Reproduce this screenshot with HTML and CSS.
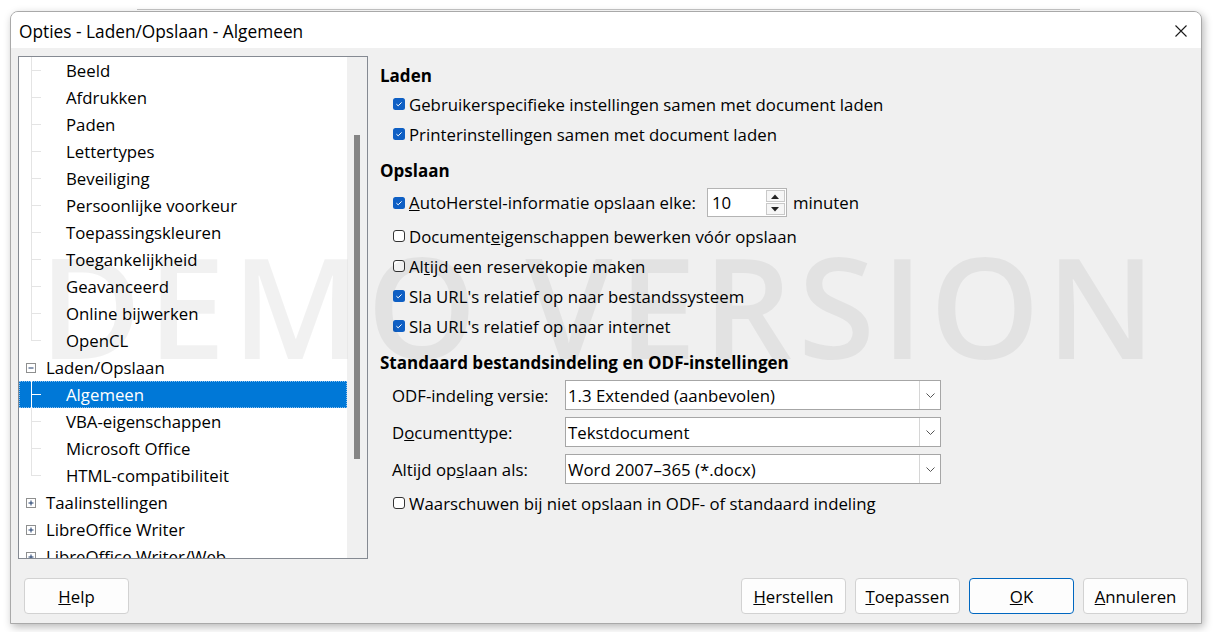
FILE: index.html
```html
<!DOCTYPE html>
<html lang="nl">
<head>
<meta charset="utf-8">
<title>Opties - Laden/Opslaan - Algemeen</title>
<link rel="stylesheet" href="styles.css">
</head>
<body>
<div class="backwin"></div>
<div class="dialog">
  <div class="titlebar">
    <span class="title">Opties - Laden/Opslaan - Algemeen</span>
    <svg class="close" width="14" height="14" viewBox="0 0 14 14"><path d="M1.5 1.5L12.5 12.5M12.5 1.5L1.5 12.5" stroke="#1a1a1a" stroke-width="1.1" fill="none"/></svg>
  </div>
  <div class="main">
    <div class="tree">
      <ul class="rows">
        <li class="row child">Beeld</li>
        <li class="row child">Afdrukken</li>
        <li class="row child">Paden</li>
        <li class="row child">Lettertypes</li>
        <li class="row child">Beveiliging</li>
        <li class="row child">Persoonlijke voorkeur</li>
        <li class="row child">Toepassingskleuren</li>
        <li class="row child">Toegankelijkheid</li>
        <li class="row child">Geavanceerd</li>
        <li class="row child">Online bijwerken</li>
        <li class="row child last">OpenCL</li>
        <li class="row top"><svg class="exp" width="10" height="10" viewBox="0 0 10 10"><rect x="0.5" y="0.5" width="9" height="9" fill="#fff" stroke="#8e8f8f"/><path d="M2.5 5H7.5" stroke="#1c3a6b"/></svg>Laden/Opslaan</li>
        <li class="row child selected">Algemeen</li>
        <li class="row child">VBA-eigenschappen</li>
        <li class="row child">Microsoft Office</li>
        <li class="row child last">HTML-compatibiliteit</li>
        <li class="row top"><svg class="exp" width="10" height="10" viewBox="0 0 10 10"><rect x="0.5" y="0.5" width="9" height="9" fill="#fff" stroke="#8e8f8f"/><path d="M2.5 5H7.5M5 2.5V7.5" stroke="#1c3a6b"/></svg>Taalinstellingen</li>
        <li class="row top"><svg class="exp" width="10" height="10" viewBox="0 0 10 10"><rect x="0.5" y="0.5" width="9" height="9" fill="#fff" stroke="#8e8f8f"/><path d="M2.5 5H7.5M5 2.5V7.5" stroke="#1c3a6b"/></svg>LibreOffice Writer</li>
        <li class="row top"><svg class="exp" width="10" height="10" viewBox="0 0 10 10"><rect x="0.5" y="0.5" width="9" height="9" fill="#fff" stroke="#8e8f8f"/><path d="M2.5 5H7.5M5 2.5V7.5" stroke="#1c3a6b"/></svg>LibreOffice Writer/Web</li>
      </ul>
      <div class="vscroll"><div class="thumb"></div></div>
    </div>
    <div class="pane">
      <div class="heading h-laden">Laden</div>
      <div class="check-row first-check">
        <svg class="cb" width="12" height="12" viewBox="0 0 12 12"><rect width="12" height="12" rx="2.5" fill="#0e5fc4"/><path d="M3.4 6.2L5.2 7.8L8.6 4.4" stroke="#fff" stroke-width="1" fill="none"/></svg>
        <span>Gebruikerspecifieke instellingen samen met document laden</span>
      </div>
      <div class="check-row">
        <svg class="cb" width="12" height="12" viewBox="0 0 12 12"><rect width="12" height="12" rx="2.5" fill="#0e5fc4"/><path d="M3.4 6.2L5.2 7.8L8.6 4.4" stroke="#fff" stroke-width="1" fill="none"/></svg>
        <span>Printerinstellingen samen met document laden</span>
      </div>

      <div class="heading h-opslaan">Opslaan</div>
      <div class="check-row spin-row">
        <svg class="cb" width="12" height="12" viewBox="0 0 12 12"><rect width="12" height="12" rx="2.5" fill="#0e5fc4"/><path d="M3.4 6.2L5.2 7.8L8.6 4.4" stroke="#fff" stroke-width="1" fill="none"/></svg>
        <span><u>A</u>utoHerstel-informatie opslaan elke:</span>
        <div class="spin">
          <span class="spin-val">10</span>
          <div class="spin-btns">
            <div class="sb"><svg width="8" height="5" viewBox="0 0 8 5"><path d="M0 5L4 0.5L8 5Z" fill="#222"/></svg></div>
            <div class="sb"><svg width="8" height="5" viewBox="0 0 8 5"><path d="M0 0L4 4.5L8 0Z" fill="#222"/></svg></div>
          </div>
        </div>
        <span class="after-spin">minuten</span>
      </div>
      <div class="check-row after-spin-row">
        <svg class="cb" width="12" height="12" viewBox="0 0 12 12"><rect x="0.5" y="0.5" width="11" height="11" rx="2.5" fill="#fff" stroke="#333"/></svg>
        <span>Document<u>e</u>igenschappen bewerken vóór opslaan</span>
      </div>
      <div class="check-row">
        <svg class="cb" width="12" height="12" viewBox="0 0 12 12"><rect x="0.5" y="0.5" width="11" height="11" rx="2.5" fill="#fff" stroke="#333"/></svg>
        <span>Al<u>t</u>ijd een reservekopie maken</span>
      </div>
      <div class="check-row">
        <svg class="cb" width="12" height="12" viewBox="0 0 12 12"><rect width="12" height="12" rx="2.5" fill="#0e5fc4"/><path d="M3.4 6.2L5.2 7.8L8.6 4.4" stroke="#fff" stroke-width="1" fill="none"/></svg>
        <span>Sla URL's relatief op naar bestandssysteem</span>
      </div>
      <div class="check-row">
        <svg class="cb" width="12" height="12" viewBox="0 0 12 12"><rect width="12" height="12" rx="2.5" fill="#0e5fc4"/><path d="M3.4 6.2L5.2 7.8L8.6 4.4" stroke="#fff" stroke-width="1" fill="none"/></svg>
        <span>Sla URL's relatief op naar internet</span>
      </div>

      <div class="heading h-std">Standaard bestandsindeling en ODF-instellingen</div>
      <div class="combo-grid">
        <span class="clabel">ODF-indeling versie:</span>
        <div class="combo"><span class="cval">1.3 Extended (aanbevolen)</span><span class="cbtn"><svg width="9" height="5" viewBox="0 0 9 5"><path d="M0.5 0.5L4.5 4.5L8.5 0.5" stroke="#555" fill="none"/></svg></span></div>
        <span class="clabel">D<u>o</u>cumenttype:</span>
        <div class="combo"><span class="cval">Tekstdocument</span><span class="cbtn"><svg width="9" height="5" viewBox="0 0 9 5"><path d="M0.5 0.5L4.5 4.5L8.5 0.5" stroke="#555" fill="none"/></svg></span></div>
        <span class="clabel">Altijd op<u>s</u>laan als:</span>
        <div class="combo"><span class="cval">Word 2007–365 (*.docx)</span><span class="cbtn"><svg width="9" height="5" viewBox="0 0 9 5"><path d="M0.5 0.5L4.5 4.5L8.5 0.5" stroke="#555" fill="none"/></svg></span></div>
      </div>
      <div class="check-row warn-row">
        <svg class="cb" width="12" height="12" viewBox="0 0 12 12"><rect x="0.5" y="0.5" width="11" height="11" rx="2.5" fill="#fff" stroke="#333"/></svg>
        <span>Waarschuwen bij niet opslaan in ODF- of standaard indeling</span>
      </div>
    </div>
  </div>
  <div class="buttons">
    <button class="btn"><u>H</u>elp</button>
    <div class="btn-group">
      <button class="btn"><u>H</u>erstellen</button>
      <button class="btn"><u>T</u>oepassen</button>
      <button class="btn default"><u>O</u>K</button>
      <button class="btn"><u>A</u>nnuleren</button>
    </div>
  </div>
  <div class="watermark">DEMO VERSION</div>
</div>
</body>
</html>
```

FILE: styles.css
```css
* { box-sizing: border-box; }

html, body {
  margin: 0;
  padding: 0;
  background: #ffffff;
  width: 1216px;
  height: 632px;
  overflow: hidden;
}

body {
  font-family: "Open Sans", "Noto Sans", sans-serif;
  font-size: 16.8px;
  color: #000;
  position: relative;
}

.backwin {
  position: absolute;
  left: 137px;
  top: 9px;
  width: 943px;
  height: 1px;
  background: #c6c6c6;
}

.dialog {
  position: relative;
  margin: 11px 0 0 10px;
  width: 1192px;
  height: 613px;
  border: 1px solid #a9a9a9;
  border-radius: 8px 8px 0 0;
  background: #f0f0f0;
  box-shadow: 2px 3px 8px rgba(0, 0, 0, 0.28);
  display: flex;
  flex-direction: column;
  overflow: hidden;
}

.titlebar {
  height: 36px;
  background: #ffffff;
  display: flex;
  align-items: center;
  justify-content: space-between;
  padding: 0 13px 0 8px;
  flex: none;
}

.title {
  font-size: 17.3px;
  color: #000;
  margin-top: 2px;
}

.close {
  margin-top: 2px;
}

.main {
  display: flex;
  padding: 8px 0 0 7px;
  flex: none;
}

.tree {
  width: 350px;
  height: 503px;
  border: 1px solid #858a92;
  background: #fff;
  display: flex;
  overflow: hidden;
}

.rows {
  list-style: none;
  margin: 0;
  padding: 0;
  width: 328px;
  flex: none;
}

.row {
  height: 27px;
  display: flex;
  align-items: center;
  position: relative;
  white-space: nowrap;
  color: #000;
}

.row.child {
  padding-left: 47px;
}

.row.top {
  padding-left: 7px;
}

.exp {
  margin-right: 10px;
  flex: none;
}

.row.child::before {
  content: "";
  position: absolute;
  left: 12px;
  top: 0;
  bottom: 0;
  border-left: 1px solid #e4e4e4;
}

.row.child.last::before {
  bottom: 13px;
}

.row.child::after {
  content: "";
  position: absolute;
  left: 12px;
  top: 13px;
  width: 10px;
  border-top: 1px solid #e4e4e4;
}

.row.selected {
  background: #0078d7;
  color: #fff;
  outline: 1px dotted #8cc0ee;
  outline-offset: -1px;
}

.row.selected::before,
.row.selected::after {
  border-color: #ffffff;
}

.vscroll {
  width: 20px;
  flex: none;
  background: #f0f0f0;
  padding: 78px 0 0 7px;
}

.thumb {
  width: 6px;
  height: 324px;
  background: #858585;
}

.pane {
  margin-left: 12px;
  flex: 1;
  display: flex;
  flex-direction: column;
}

.heading {
  height: 24px;
  line-height: 24px;
  font-weight: 700;
  font-size: 17px;
  white-space: nowrap;
}

.h-laden { margin-top: 8px; }
.h-opslaan { margin-top: 10px; }
.h-std { margin-top: 10px; }

.check-row {
  height: 30px;
  display: flex;
  align-items: center;
  padding-left: 13px;
  white-space: nowrap;
}

.first-check { margin-top: 1px; }

.cb {
  flex: none;
  margin-right: 4px;
}

.spin-row {
  height: 29px;
  margin-top: 5px;
}

.after-spin-row {
  margin-top: 4px;
}

.spin {
  margin-left: 11px;
  width: 80px;
  height: 29px;
  border: 1px solid #b4b4b4;
  background: #fff;
  display: flex;
  align-items: center;
  justify-content: space-between;
  padding: 0 1px 0 4px;
  flex: none;
}

.spin-btns {
  display: flex;
  flex-direction: column;
  gap: 1px;
}

.sb {
  width: 19px;
  height: 12px;
  border: 1px solid #c9c9c9;
  background: #f6f6f6;
  display: flex;
  align-items: center;
  justify-content: center;
}

.after-spin {
  margin-left: 6px;
}

.combo-grid {
  margin-top: 5px;
  display: grid;
  grid-template-columns: 185px 376px;
  row-gap: 7px;
  align-items: center;
}

.clabel {
  padding-left: 12px;
  white-space: nowrap;
}

.combo {
  height: 30px;
  border: 1px solid #a6a6a6;
  background: #fff;
  display: flex;
  align-items: center;
  justify-content: space-between;
}

.cval {
  padding-left: 2px;
  white-space: nowrap;
}

.cbtn {
  width: 21px;
  height: 100%;
  border-left: 1px solid #d6d6d6;
  display: flex;
  align-items: center;
  justify-content: center;
}

.warn-row {
  margin-top: 4px;
}

.buttons {
  display: flex;
  justify-content: space-between;
  padding: 0 13px 0 13px;
  margin-top: 19px;
}

.btn-group {
  display: flex;
  gap: 9px;
}

.btn {
  width: 105px;
  height: 36px;
  border: 1px solid #d2d2d2;
  border-radius: 4px;
  background: #fdfdfd;
  font-family: "Open Sans", "Noto Sans", sans-serif;
  font-size: 16.8px;
  color: #000;
  padding: 0;
}

.btn.default {
  border-color: #0067c0;
}

.watermark {
  position: absolute;
  left: 28px;
  top: 223px;
  font-size: 140px;
  line-height: 1;
  font-weight: 600;
  letter-spacing: 6px;
  color: rgba(0, 0, 0, 0.055);
  white-space: nowrap;
  pointer-events: none;
}
```
